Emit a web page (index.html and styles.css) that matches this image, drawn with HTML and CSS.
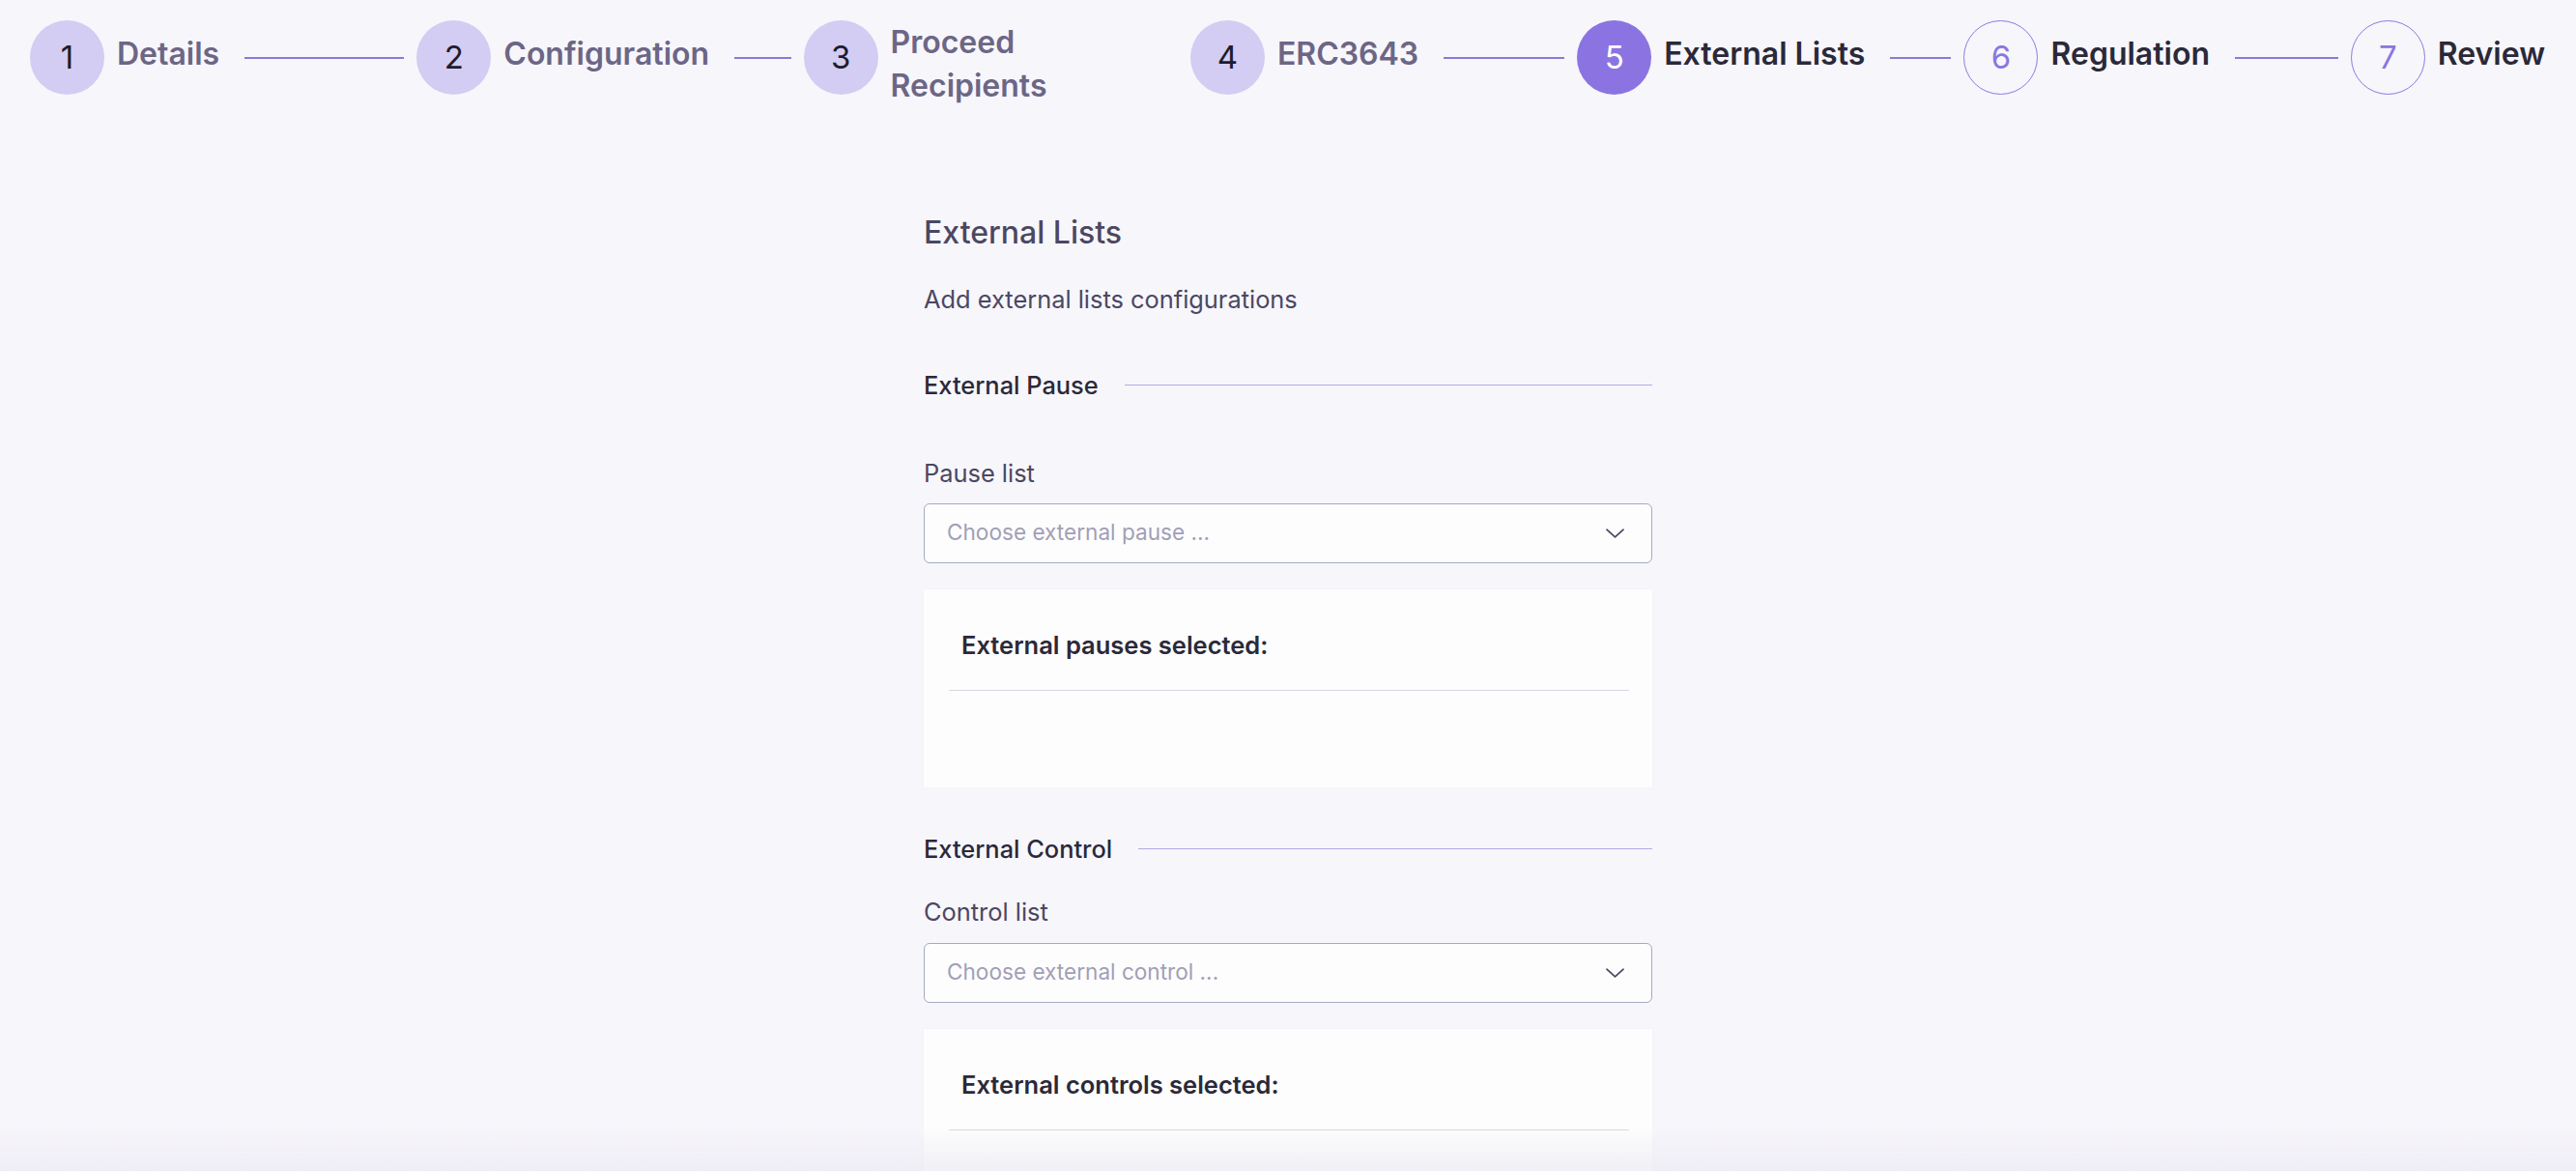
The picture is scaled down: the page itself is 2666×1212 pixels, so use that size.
FILE: index.html
```html
<!DOCTYPE html>
<html lang="en">
<head>
<meta charset="utf-8">
<title>External Lists</title>
<link rel="stylesheet" href="styles.css">
</head>
<body>
<nav class="stepper">
  <div class="step step--done">
    <div class="step-circle">1</div>
    <div class="step-title">Details</div>
    <div class="step-sep"></div>
  </div>
  <div class="step step--done">
    <div class="step-circle">2</div>
    <div class="step-title">Configuration</div>
    <div class="step-sep"></div>
  </div>
  <div class="step step--done">
    <div class="step-circle">3</div>
    <div class="step-title step-title--multi">Proceed Recipients</div>
    <div class="step-sep"></div>
  </div>
  <div class="step step--done">
    <div class="step-circle">4</div>
    <div class="step-title">ERC3643</div>
    <div class="step-sep"></div>
  </div>
  <div class="step step--active">
    <div class="step-circle">5</div>
    <div class="step-title">External Lists</div>
    <div class="step-sep"></div>
  </div>
  <div class="step step--todo">
    <div class="step-circle">6</div>
    <div class="step-title">Regulation</div>
    <div class="step-sep"></div>
  </div>
  <div class="step step--todo step--last">
    <div class="step-circle">7</div>
    <div class="step-title">Review</div>
  </div>
</nav>

<main class="content">
  <h1 class="page-title">External Lists</h1>
  <p class="page-subtitle">Add external lists configurations</p>

  <section class="section section--pause">
    <div class="section-head">
      <span class="section-name">External Pause</span>
      <span class="section-line"></span>
    </div>
    <label class="field-label">Pause list</label>
    <div class="select">
      <span class="select-placeholder">Choose external pause ...</span>
      <svg class="select-chevron" viewBox="0 0 20 10" width="20" height="10" aria-hidden="true">
        <polyline points="1,1 10,9 19,1" fill="none" stroke="#4a4660" stroke-width="1.8" stroke-linecap="round" stroke-linejoin="round"/>
      </svg>
    </div>
    <div class="panel">
      <div class="panel-title">External pauses selected:</div>
      <div class="panel-divider"></div>
    </div>
  </section>

  <section class="section section--control">
    <div class="section-head">
      <span class="section-name">External Control</span>
      <span class="section-line"></span>
    </div>
    <label class="field-label">Control list</label>
    <div class="select">
      <span class="select-placeholder">Choose external control ...</span>
      <svg class="select-chevron" viewBox="0 0 20 10" width="20" height="10" aria-hidden="true">
        <polyline points="1,1 10,9 19,1" fill="none" stroke="#4a4660" stroke-width="1.8" stroke-linecap="round" stroke-linejoin="round"/>
      </svg>
    </div>
    <div class="panel">
      <div class="panel-title">External controls selected:</div>
      <div class="panel-divider"></div>
    </div>
  </section>
</main>

<div class="bottom-fade"></div>
</body>
</html>
```

FILE: styles.css
```css
* { box-sizing: border-box; }

html, body {
  margin: 0;
  padding: 0;
  background: #f7f6fb;
  font-family: Inter, "Noto Sans", "Liberation Sans", sans-serif;
  color: #2b2939;
}

/* ---------- stepper ---------- */
.stepper {
  display: flex;
  align-items: flex-start;
  gap: 13px;
  padding: 21px 32px 0 31px;
}

.step {
  flex: 1 1 0;
  min-width: 0;
  display: flex;
  align-items: flex-start;
  gap: 13px;
}

.step--last {
  flex: 0 0 auto;
}

.step-circle {
  flex: none;
  width: 77px;
  height: 77px;
  border-radius: 50%;
  display: flex;
  align-items: center;
  justify-content: center;
  font-size: 33px;
  font-weight: 400;
  line-height: 1;
}

.step-title {
  flex: 0 1 auto;
  min-width: 0;
  margin-top: 12px;
  font-size: 32px;
  font-weight: 600;
  line-height: 45px;
}

.step-title--multi {
  margin-top: 0;
}

.step-sep {
  flex: 1 1 0;
  min-width: 0;
  height: 1.5px;
  margin-top: 38px;
  margin-left: 13px;
  background: #8a7bd8;
}

.step--done .step-circle {
  background: #d3ccf3;
  color: #1e1c2c;
}
.step--done .step-title { color: #6c6686; }

.step--active .step-circle {
  background: #8b74e2;
  color: #ffffff;
}
.step--active .step-title { color: #2b2939; }

.step--todo .step-circle {
  border: 1.5px solid #8b7be0;
  color: #8a76e0;
}
.step--todo .step-title { color: #2b2939; }

/* ---------- content ---------- */
.content {
  width: 754px;
  margin: 106px auto 0;
}

.page-title {
  margin: 0;
  font-size: 32px;
  font-weight: 500;
  line-height: 48px;
  color: #4b4762;
}

.page-subtitle {
  margin: 26px 0 0;
  font-size: 25.4px;
  font-weight: 400;
  line-height: 37.5px;
  color: #4b4762;
}

.section--pause { margin-top: 51px; }
.section--control { margin-top: 45px; }

.section-head {
  display: flex;
  align-items: center;
  gap: 27px;
  height: 37.5px;
}

.section--pause .section-head { margin-bottom: 54px; }
.section--control .section-head { margin-bottom: 28px; }

.section-name {
  font-size: 25.4px;
  font-weight: 500;
  line-height: 37.5px;
  color: #2b2939;
  white-space: nowrap;
}

.section-line {
  flex: 1;
  height: 1.5px;
  background: #b3aae6;
}

.field-label {
  display: block;
  font-size: 25.4px;
  font-weight: 400;
  line-height: 37.5px;
  color: #4b4762;
  margin-bottom: 13px;
}

.section--pause .field-label { margin-bottom: 12px; }

.select {
  display: flex;
  align-items: center;
  justify-content: space-between;
  height: 62px;
  padding: 0 28px 0 23px;
  border: 1.5px solid #a4abc0;
  border-radius: 6px;
  background: #fdfdfe;
}

.select-placeholder {
  font-size: 22.6px;
  line-height: 1;
  color: #a29fb6;
}

.select-chevron {
  flex: none;
  width: 19px;
  height: 10px;
}

.panel {
  margin-top: 27px;
  min-height: 205px;
  padding: 26px 24px 26px 26px;
  background: #fdfdfd;
  box-shadow: 0 0 2px rgba(60, 50, 120, 0.04);
}

.panel-title {
  padding: 14px 0 0 13px;
  font-size: 25.5px;
  font-weight: 600;
  line-height: 36px;
  color: #2b2939;
}

.panel-divider {
  margin-top: 28px;
  height: 1.5px;
  background: #d9d7e2;
}

/* soft fade at the bottom edge of the viewport */
.bottom-fade {
  position: fixed;
  left: 0;
  right: 0;
  bottom: 0;
  height: 44px;
  background: linear-gradient(to bottom, rgba(240, 239, 246, 0), rgba(235, 234, 242, 0.75));
  pointer-events: none;
}
```
